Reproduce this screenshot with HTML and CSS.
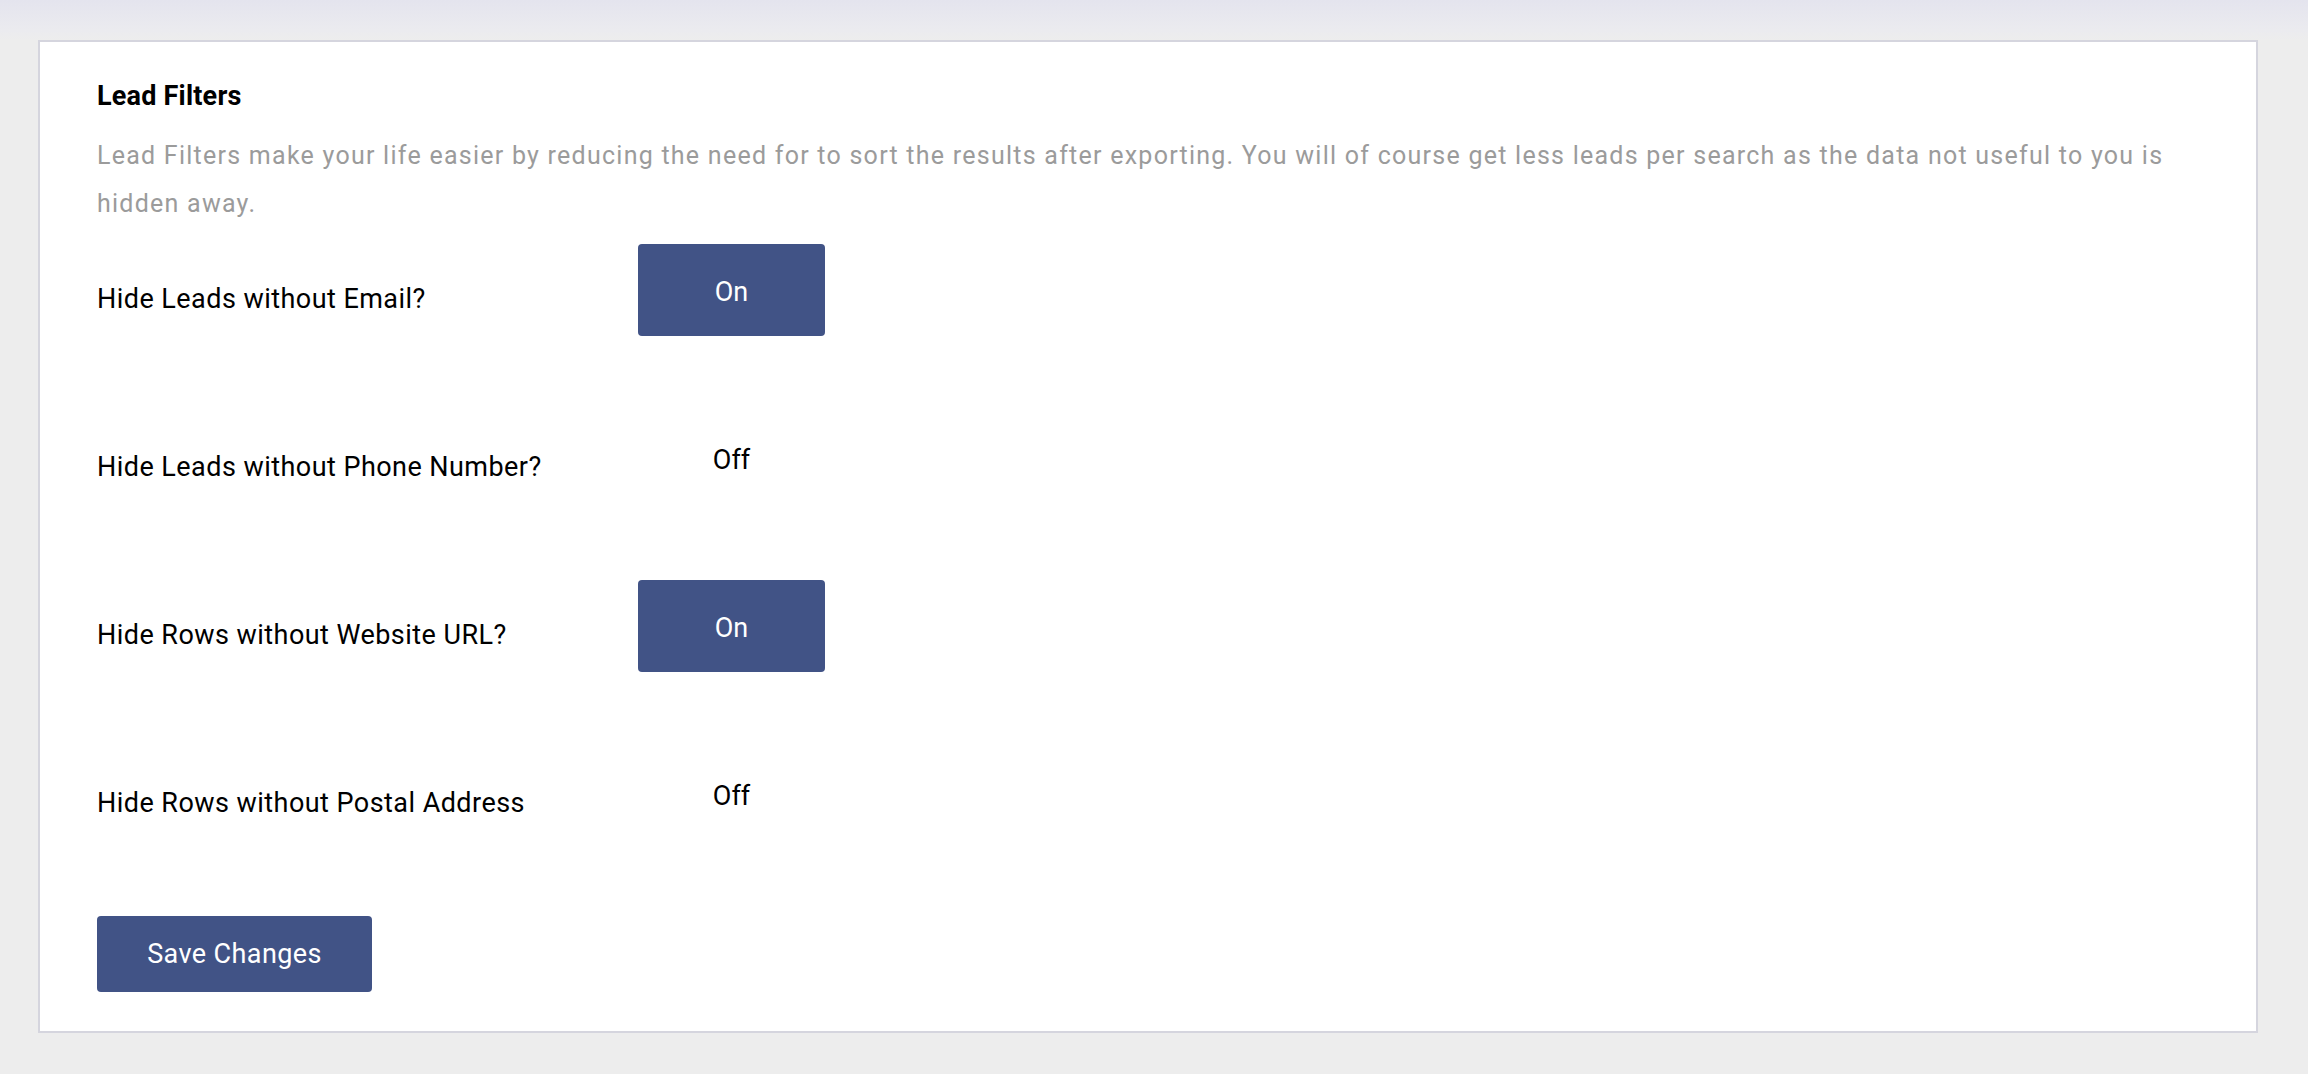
FILE: index.html
```html
<!DOCTYPE html>
<html lang="en">
<head>
<meta charset="utf-8">
<title>Lead Filters</title>
<link rel="stylesheet" href="styles.css">
</head>
<body>
<div class="page">
  <section class="card">
    <h2 class="title">Lead Filters</h2>
    <p class="desc">Lead Filters make your life easier by reducing the need for to sort the results after exporting. You will of course get less leads per search as the data not useful to you is hidden away.</p>
    <div class="filters">
      <div class="row">
        <span class="label">Hide Leads without Email?</span>
        <button class="toggle on">On</button>
      </div>
      <div class="row">
        <span class="label">Hide Leads without Phone Number?</span>
        <button class="toggle off">Off</button>
      </div>
      <div class="row">
        <span class="label">Hide Rows without Website URL?</span>
        <button class="toggle on">On</button>
      </div>
      <div class="row">
        <span class="label">Hide Rows without Postal Address</span>
        <button class="toggle off">Off</button>
      </div>
    </div>
    <button class="save">Save Changes</button>
  </section>
</div>
</body>
</html>
```

FILE: styles.css
```css
html, body {
  margin: 0;
  padding: 0;
}
body {
  background: #ededed;
  font-family: Roboto, "Liberation Sans", sans-serif;
  color: #000;
  min-height: 1074px;
}
.page {
  background: linear-gradient(to bottom, #e4e4ee 0px, #ebebef 30px, #ededed 40px);
  padding: 40px 50px 40px 38px;
}
.card {
  background: #fff;
  border: 2px solid #d5d5de;
  padding: 38px 57px 39px 57px;
}
.title {
  margin: 0;
  font-size: 27px;
  line-height: 32px;
  font-weight: 700;
  letter-spacing: 0.2px;
}
.desc {
  margin: 20px 0 0 0;
  font-size: 25px;
  line-height: 48px;
  letter-spacing: 1.25px;
  color: #9b9b9b;
}
.filters {
  margin-top: 16px;
  display: flex;
  flex-direction: column;
  gap: 76px;
}
.row {
  display: grid;
  grid-template-columns: 541px 187px;
  align-items: center;
}
.label {
  font-size: 27px;
  letter-spacing: 0.45px;
  line-height: 32px;
  padding-top: 17px;
}
.toggle {
  height: 92px;
  border: none;
  border-radius: 4px;
  font-family: inherit;
  font-size: 27px;
  padding: 4px 0 0 0;
}
.toggle.on {
  background: #415386;
  color: #fff;
}
.toggle.off {
  background: transparent;
  color: #000;
}
.save {
  margin-top: 76px;
  width: 275px;
  height: 76px;
  border: none;
  border-radius: 4px;
  background: #415386;
  color: #fff;
  font-family: inherit;
  font-size: 27px;
  letter-spacing: 0.4px;
  padding: 0;
  display: block;
}
```
